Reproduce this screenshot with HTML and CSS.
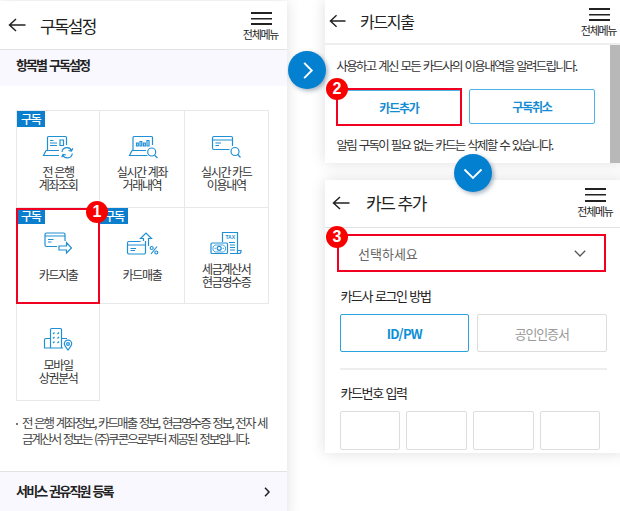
FILE: index.html
```html
<!DOCTYPE html>
<html lang="ko">
<head>
<meta charset="utf-8">
<title>구독설정</title>
<link rel="stylesheet" href="styles.css">
</head>
<body>
<main class="guide">
  <section class="panel settings">
    <header class="bar">
      <svg class="back" viewBox="0 0 18 14"><path d="M8 1 1.5 7 8 13M1.5 7H17.5"/></svg>
      <h1 class="title">구독설정</h1>
      <div class="menu"><i class="lines"></i><span class="menu-label">전체메뉴</span></div>
    </header>
    <h2 class="band">항목별 구독설정</h2>
    <div class="tiles">
      <div class="tile"><span class="tag">구독</span>
        <svg class="icon" viewBox="0 0 40 28"><path d="M9.5 18V5.500Q9.500 4.500 10.500 4.500H27.500Q28.500 4.500 28.500 5.500V13M8 18.500H21M8 18.500 5.500 23.500H21M12 8.500h3.500M12 11h7M12 13.500h7M22 8h3.500v5.500h-3.500zM24 20a5 5 0 0 1 9.500-1.500M34.300 21.500a5 5 0 0 1-9.500 1.500M30.500 18.500l3 .500 1.300-2.800M28 23l-3-.500-1.300 2.800"/></svg>
        <span class="label">전 은행<br>계좌조회</span></div>
      <div class="tile">
        <svg class="icon" viewBox="0 0 40 28"><path d="M11 18V5.500Q11 4.500 12 4.500H29.500Q30.500 4.500 30.500 5.500V13M10 18.500H24M10 18.500 7.500 23.500H25.500M14.500 11h1.800v3h-1.800zM18 9.500h1.800V14h-1.800zM21.500 11h1.800v3h-1.800zM25 8.500h2V14H25zM32.500 23.200 35.500 26"/><circle cx="29.700" cy="20" r="4"/></svg>
        <span class="label">실시간 계좌<br>거래내역</span></div>
      <div class="tile">
        <svg class="icon" viewBox="0 0 40 28"><path d="M23.500 17.500H8A1.500 1.500 0 0 1 6.500 16V6A1.500 1.500 0 0 1 8 4.500H25A1.500 1.500 0 0 1 26.500 6V14M6.500 8H26.500M9.500 11H15M9.500 13.500H13M31.800 22.500 34.500 25.500"/><circle cx="29" cy="19.500" r="4"/></svg>
        <span class="label">실시간 카드<br>이용내역</span></div>
      <div class="tile"><span class="tag">구독</span>
        <svg class="icon" viewBox="0 0 40 28"><path d="M19 17.500H8.500A1.500 1.500 0 0 1 7 16V5.500A1.500 1.500 0 0 1 8.500 4H25.500A1.500 1.500 0 0 1 27 5.500V12M7 7H27M10 10.500H15.500M10 13H13.500M21 17H28.500V13.500L33.500 19 28.500 24V21H21Z"/></svg>
        <span class="label">카드지출</span></div>
      <div class="tile"><span class="tag">구독</span>
        <svg class="icon" viewBox="0 0 40 28"><path d="M18.500 12.500H7A1.500 1.500 0 0 0 5.500 14V23.500A1.500 1.500 0 0 0 7 25H22A1.500 1.500 0 0 0 23.500 23.500V12M5.500 16H23.500M8.500 19.500H14M8.500 21.500H13M21.500 12V9.500H18.500L24 4 29.500 9.500H26.500V17M29 25 35 17.500"/><circle cx="29.700" cy="19" r="1.500"/><circle cx="34.300" cy="23.500" r="1.500"/></svg>
        <span class="label">카드매출</span></div>
      <div class="tile">
        <svg class="icon" viewBox="0 0 40 28"><path d="M16.500 13V3.500H31.500V21.500H35V23A2 2 0 0 1 33 24.500H24M31.500 21.500V24M23 13.500H29M24 16H29M24 18.500H29M24 21H29"/><rect x="5" y="14" width="16.500" height="10.500" rx="1"/><path class="thin" d="M9 16h8.500l2 2v3l-2 2H9l-2-2v-3z"/><circle cx="13.200" cy="19.300" r="2"/><path class="thin" d="M8.500 19.300h1.500M16.500 19.300H18"/><text x="24.200" y="10.300">TAX</text></svg>
        <span class="label">세금계산서<br>현금영수증</span></div>
      <div class="tile">
        <svg class="icon" viewBox="0 0 40 28"><path d="M12.500 23V4.500Q12.500 3.500 13.500 3.500H22.500Q23.500 3.500 23.500 4.500V23M12.500 13.500H8Q6.500 13.500 6.500 15V23H25M23.500 13.500H29M15 9l1.500-1.500M19.500 9 21 7.500M15 13.500l1.500-1.500M19.500 13.500 21 12M15 18l1.500-1.500M19.500 18 21 16.500M30 25C28 22.500 26.300 20.500 26.300 18.800a3.700 3.700 0 0 1 7.400 0C33.700 20.500 32 22.500 30 25Z"/><circle cx="30" cy="19" r="1.400"/></svg>
        <span class="label">모바일<br>상권분석</span></div>
      <div class="selection"><b class="badge">1</b></div>
    </div>
    <p class="note">전 은행 계좌정보, 카드매출 정보, 현금영수증 정보, 전자 세<br>금계산서 정보는 (주)쿠콘으로부터 제공된 정보입니다.</p>
    <footer class="more"><span>서비스 권유직원 등록</span><svg viewBox="0 0 6 10"><path d="M1 .800 5 5 1 9.200"/></svg></footer>
  </section>

  <div class="column">
    <section class="panel spending">
      <header class="bar">
        <svg class="back" viewBox="0 0 18 14"><path d="M8 1 1.500 7 8 13M1.500 7H17.500"/></svg>
        <h1 class="title">카드지출</h1>
        <div class="menu"><i class="lines"></i><span class="menu-label">전체메뉴</span></div>
      </header>
      <div class="content">
        <p class="desc">사용하고 계신 모든 카드사의 이용내역을 알려드립니다.</p>
        <div class="actions">
          <div class="action picked"><span>카드추가</span><b class="badge">2</b></div>
          <div class="action"><span>구독취소</span></div>
        </div>
        <p class="desc second">알림 구독이 필요 없는 카드는 삭제할 수 있습니다.</p>
      </div>
    </section>

    <section class="panel add">
      <header class="bar">
        <svg class="back" viewBox="0 0 18 14"><path d="M8 1 1.500 7 8 13M1.500 7H17.500"/></svg>
        <h1 class="title">카드 추가</h1>
        <div class="menu"><i class="lines"></i><span class="menu-label">전체메뉴</span></div>
      </header>
      <div class="form">
        <div class="select"><span>선택하세요</span><svg viewBox="0 0 12 7"><path d="M.800 .800 6 6 11.200 .800"/></svg><b class="badge">3</b></div>
        <h3 class="field login">카드사 로그인 방법</h3>
        <div class="methods"><div class="method on">ID/PW</div><div class="method">공인인증서</div></div>
        <h3 class="field number">카드번호 입력</h3>
        <div class="digits"><i></i><i></i><i></i><i></i></div>
      </div>
    </section>
  </div>

  <div class="step right"><svg viewBox="0 0 20 20"><path d="M6.500 2 14.500 10 6.500 18"/></svg></div>
  <div class="step down"><svg viewBox="0 0 20 20"><path d="M1.500 6.500 10 15 18.500 6.500"/></svg></div>
</main>
</body>
</html>
```
FILE: styles.css
```css
* { box-sizing: border-box; margin: 0; padding: 0; }
body { width: 620px; height: 511px; overflow: hidden; background: #fff; color: #222; font-family: "Noto Sans CJK KR", sans-serif; }
svg { display: block; fill: none; stroke: #222; overflow: visible; }
i { display: block; }
.guide { position: relative; display: flex; gap: 38px; width: 620px; height: 511px; overflow: hidden; }
.panel { background: #fff; box-shadow: 0 0 14px rgba(0,0,0,.13); }
.settings { width: 287px; height: 520px; margin-top: 1px; flex: none; }
.column { flex: none; width: 300px; display: flex; flex-direction: column; gap: 17px; }

.bar { display: flex; align-items: center; height: 49px; border-bottom: 1px solid #e2e2e2; padding-left: 8px; }
.back { width: 18px; height: 14px; stroke-width: 1.5; }
.title { font-size: 17px; font-weight: 400; letter-spacing: -1.75px; margin-left: 14px; line-height: 24px; white-space: nowrap; padding-top: 1px; }
.menu { margin: 2px 1px 0 auto; display: flex; flex-direction: column; align-items: center; width: 50px; }
.lines { width: 21px; height: 13px; border: solid #222; border-width: 2px 0; background: linear-gradient(#222, #222) 0 4px / 100% 1.500px no-repeat; }
.menu-label { font-size: 11px; letter-spacing: -1.3px; line-height: 12px; margin: 3px 1px 0 0; white-space: nowrap; }

.band { height: 36px; background: #f8f8fe; padding-left: 16px; line-height: 30px; font-size: 13px; font-weight: 700; letter-spacing: -1.9px; word-spacing: 1px; }
.tiles { position: relative; display: grid; grid-template-columns: repeat(3, 84.3px); grid-auto-rows: 96.6px; margin: 24px 0 0 16px; width: 253px; border-top: 1px solid #e8e8e8; }
.tile { position: relative; border: solid #e8e8e8; border-width: 0 1px 1px 0; padding-top: 21px; display: flex; flex-direction: column; align-items: center; }
.tile:nth-child(3n+1) { border-left-width: 1px; }
.tag { position: absolute; left: 0; top: 0; width: 28px; height: 16px; background: #0b7fce; color: #fff; font-size: 12px; font-weight: 500; line-height: 15px; letter-spacing: -1.3px; padding-left: 4px; }
.icon { width: 40px; height: 28px; stroke: #218fd3; stroke-width: 1.2; }
.icon .thin { stroke-width: .8; }
.icon text { font: bold 5px "Liberation Sans", sans-serif; fill: #218fd3; stroke: none; text-anchor: middle; }
.label { height: 26px; margin-top: 5px; display: grid; place-content: center; text-align: center; font-size: 12px; line-height: 13px; letter-spacing: -1.35px; color: #333; white-space: nowrap; }
.selection { position: absolute; left: 0; top: 97px; width: 84px; height: 96px; border: 2px solid #f20022; }
.badge { position: absolute; width: 22px; height: 22px; border-radius: 50%; background: #f90000; color: #fff; font: bold 16px/22px "Liberation Sans", sans-serif; letter-spacing: 0; text-align: center; }
.selection .badge { right: -10px; top: -9px; }
.note { position: relative; margin: 14px 0 0 22px; font-size: 12.500px; line-height: 16px; letter-spacing: -1.930px; word-spacing: .900px; color: #444; white-space: nowrap; }
.note::before { content: ""; position: absolute; left: -6px; top: 8px; width: 2px; height: 2px; background: #777; }
.more { display: flex; align-items: center; justify-content: space-between; height: 50px; margin-top: 24px; padding: 0 17px 11px 16px; background: #f8f8fe; border-top: 1px solid #e2e2e2; font-size: 13px; font-weight: 700; letter-spacing: -1.800px; word-spacing: .800px; }
.more svg { width: 6px; height: 10px; stroke-width: 1.500; margin-top: 3px; }

.spending { height: 163px; }
.spending .bar { height: 45px; border-bottom-width: 2px; border-color: #eee; padding-left: 4px; padding-bottom: 2px; }
.spending .back { width: 17px; }
.spending .title { font-size: 16px; letter-spacing: -1.300px; }
.spending .menu { margin-top: 3px; }
.content { height: 118px; margin-right: 5px; border-right: 10px solid #b8b8b8; padding: 12px 0 0 11.500px; }
.desc { font-size: 12.500px; letter-spacing: -1.720px; word-spacing: .900px; line-height: 17px; color: #333; white-space: nowrap; }
.desc.second { margin-top: 12px; }
.actions { display: flex; gap: 7px; margin: 14px 0 0 -.500px; }
.action { position: relative; width: 126px; height: 35px; margin-top: 1px; border: 1px solid #4db2e6; border-radius: 2px; display: flex; align-items: center; justify-content: center; color: #148bd2; font-size: 12px; font-weight: 700; letter-spacing: -1.200px; }
.action.picked { height: 38px; margin: 0 0 -2px; border: 2px solid #f20022; border-radius: 0; box-shadow: inset 0 1px #4db2e6; }
.picked .badge { left: -12px; top: -12px; }

.add { height: 273px; }
.add .bar { height: 48px; padding-left: 7px; padding-bottom: 2px; }
.add .title { letter-spacing: -1.500px; margin-left: 16px; }
.add .menu { margin: 0 4.500px 0 auto; }
.add .lines { height: 14px; }
.form { padding: 6px 0 0 14.500px; }
.select { position: relative; display: flex; align-items: center; justify-content: space-between; width: 269px; height: 38px; margin-left: -2.500px; padding: 0 18px 0 19px; border: 2px solid #f20022; color: #666; font-size: 13px; letter-spacing: 0; }
.select svg { width: 12px; height: 7px; stroke: #555; stroke-width: 1.300; }
.select .badge { left: -13px; top: -10px; }
.field { font-size: 13px; font-weight: 400; letter-spacing: -1.400px; word-spacing: .500px; line-height: 18px; color: #222; }
.login { margin-top: 15px; padding-left: 1px; }
.methods { display: flex; gap: 8px; width: 267px; margin-top: 9px; padding-bottom: 16px; border-bottom: 2px solid #eee; }
.method { flex: 1; height: 38px; border: 1px solid #ddd; border-radius: 2px; text-align: center; line-height: 37px; font-size: 13px; letter-spacing: -1.200px; color: #999; }
.method.on { border-color: #2aa3df; color: #0b8fd6; font-weight: 700; letter-spacing: -.800px; }
.number { margin-top: 14px; padding-left: 1px; }
.digits { display: flex; gap: 6px; margin-top: 9px; }
.digits i { width: 60.700px; height: 39px; border: 1px solid #ddd; border-radius: 2px; }

.step { position: absolute; width: 38px; height: 38px; border-radius: 50%; background: #0380cf; box-shadow: 2px 2px 4px rgba(0,40,80,.35); display: grid; place-items: center; }
.step svg { width: 20px; height: 20px; stroke: #fff; stroke-width: 1.800; }
.step.right { left: 288px; top: 51px; }
.step.right svg { width: 19px; height: 19px; stroke-width: 2; }
.step.down { left: 454px; top: 154px; }
```
